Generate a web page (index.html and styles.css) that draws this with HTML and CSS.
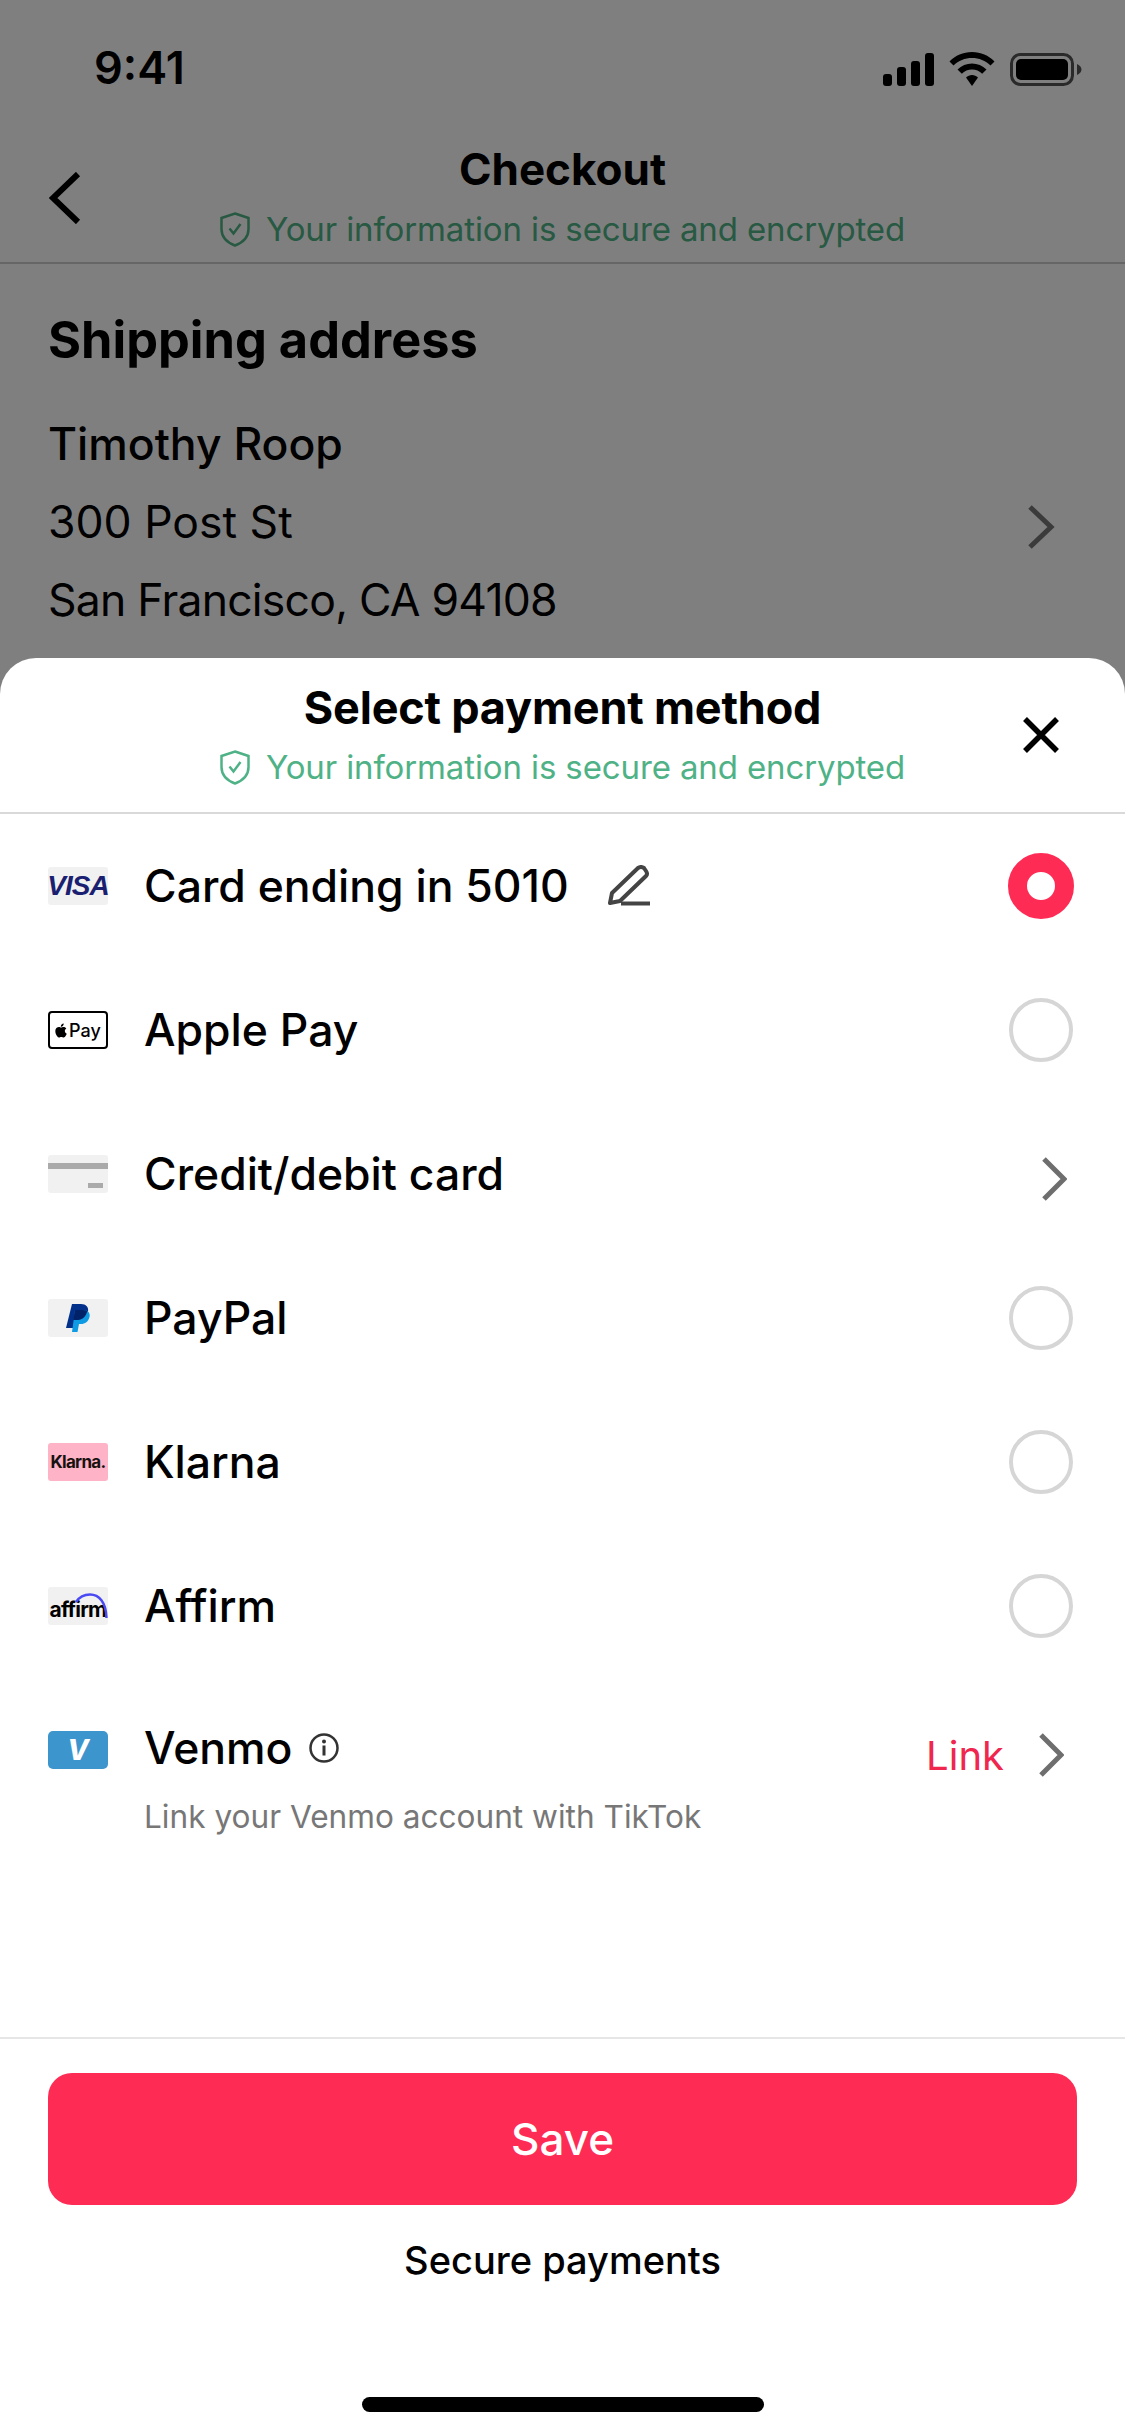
FILE: index.html
```html
<!DOCTYPE html>
<html lang="en">
<head>
<meta charset="utf-8">
<title>Checkout</title>
<link rel="stylesheet" href="styles.css">
</head>
<body>
<div class="screen">
  <div class="status">
    <span class="time">9:41</span>
    <div class="status-icons">
      <svg width="52" height="33" viewBox="0 0 52 33"><rect x="1" y="21" width="9" height="12" rx="3"/><rect x="15" y="14" width="9" height="19" rx="3"/><rect x="29" y="8" width="9" height="25" rx="3"/><rect x="43" y="0" width="9" height="33" rx="3"/></svg>
      <svg width="46" height="34" viewBox="0 0 46 34"><path d="M23 0C14 0 6.500 3.500 0.500 9.500L4.500 13.500C9.500 8.500 16 6 23 6S36.500 8.500 41.500 13.500L45.500 9.500C39.500 3.500 32 0 23 0Z"/><path d="M23 11.500C17.500 11.500 12.500 13.500 8.500 17.500L12.800 21.800C15.500 19 19 17.500 23 17.500S30.500 19 33.200 21.800L37.500 17.500C33.500 13.500 28.500 11.500 23 11.500Z"/><path d="M23 23C20.700 23 18.700 23.900 17 25.500L23 34L29 25.500C27.300 23.900 25.300 23 23 23Z"/></svg>
      <svg width="72" height="33" viewBox="0 0 72 33"><rect x="1.500" y="1.500" width="61" height="30" rx="9" fill="none" stroke="#555" stroke-width="3"/><rect x="6" y="6" width="52" height="21" rx="5"/><path d="M67 11C69.500 12 71.500 14 71.500 16.500S69.500 21 67 22Z" fill="#555"/></svg>
    </div>
  </div>

  <header class="nav">
    <svg class="back" width="32" height="52" viewBox="0 0 32 52"><path d="M29 2L4 26L29 50" fill="none" stroke="#000" stroke-width="6"/></svg>
    <h1 class="nav-title">Checkout</h1>
    <div class="secure secure-top">
      <svg width="30" height="35" viewBox="0 0 30 35"><path d="M15 1.500L28.500 6V17C28.500 25 23 30.500 15 33.500C7 30.500 1.500 25 1.500 17V6Z" fill="none" stroke="currentColor" stroke-width="2.500"/><path d="M9.500 16.500L13.500 21.500L20.500 12" fill="none" stroke="currentColor" stroke-width="2.500"/></svg>
      <span>Your information is secure and encrypted</span>
    </div>
  </header>

  <section class="address">
    <h2 class="address-title">Shipping address</h2>
    <div class="address-body">
      <div>
        <div class="addr-line addr-name">Timothy Roop</div>
        <div class="addr-line">300 Post St</div>
        <div class="addr-line addr-city">San Francisco, CA 94108</div>
      </div>
      <svg class="addr-chevron" width="28" height="44" viewBox="0 0 28 44"><path d="M3 2L24 22L3 42" fill="none" stroke="#777" stroke-width="5"/></svg>
    </div>
  </section>

  <div class="scrim"></div>

  <section class="sheet">
    <header class="sheet-head">
      <h2 class="sheet-title">Select payment method</h2>
      <div class="secure secure-sheet">
        <svg width="30" height="35" viewBox="0 0 30 35"><path d="M15 1.500L28.500 6V17C28.500 25 23 30.500 15 33.500C7 30.500 1.500 25 1.500 17V6Z" fill="none" stroke="currentColor" stroke-width="2.500"/><path d="M9.500 16.500L13.500 21.500L20.500 12" fill="none" stroke="currentColor" stroke-width="2.500"/></svg>
        <span>Your information is secure and encrypted</span>
      </div>
      <svg class="close" width="36" height="36" viewBox="0 0 36 36"><path d="M2 2L34 34M34 2L2 34" fill="none" stroke="#000" stroke-width="5.500"/></svg>
    </header>

    <div class="methods">
      <div class="row">
        <span class="logo logo-grey logo-visa">VISA</span>
        <span class="label">Card ending in 5010</span>
        <svg class="pencil" width="44" height="42" viewBox="0 0 44 42"><path d="M3 38L5 28L31 3Q34 1 37 3L39 6Q41 9 39 11L13 36Z" fill="none" stroke="#444" stroke-width="4" stroke-linejoin="round"/><path d="M14 38.500H43" stroke="#444" stroke-width="4"/></svg>
        <span class="radio radio-on"></span>
      </div>
      <div class="row">
        <span class="logo logo-apple">
          <svg width="12" height="15" viewBox="0 0 12 15"><path d="M9.800 8C9.800 6.300 11.200 5.500 11.300 5.400C10.500 4.200 9.200 4 8.800 4C7.700 3.900 6.700 4.600 6.100 4.600C5.600 4.600 4.700 4 3.800 4C2.600 4 1.500 4.700 0.900 5.800C-0.300 7.900 0.600 11 1.800 12.700C2.400 13.500 3.100 14.500 4 14.400C4.900 14.400 5.200 13.900 6.300 13.900C7.400 13.900 7.700 14.400 8.600 14.400C9.500 14.400 10.100 13.600 10.700 12.700C11.400 11.700 11.700 10.800 11.700 10.700C11.700 10.700 9.800 10 9.800 8ZM8 2.800C8.500 2.200 8.800 1.400 8.700 0.500C8 0.600 7.100 1 6.600 1.600C6.100 2.100 5.700 3 5.800 3.800C6.600 3.900 7.400 3.400 8 2.800Z"/></svg>
          <span>Pay</span>
        </span>
        <span class="label">Apple Pay</span>
        <span class="radio"></span>
      </div>
      <div class="row">
        <span class="logo logo-grey logo-card"><i class="card-stripe"></i><i class="card-dash"></i></span>
        <span class="label">Credit/debit card</span>
        <svg class="chevron chevron-credit" width="26" height="44" viewBox="0 0 26 44"><path d="M3 2L23 22L3 42" fill="none" stroke="#6e6e6e" stroke-width="5"/></svg>
      </div>
      <div class="row">
        <span class="logo logo-grey">
          <svg width="24" height="28" viewBox="0 0 24 28"><path d="M6 0H15C20 0 23 3 22 8C21 13 17 16 12 16H9L7.500 24H0Z" fill="#00308a"/><path d="M9 6H17C22 6 24.500 9 23.500 13C22.500 17.500 19 20 15 20H13L11.500 28H6Z" fill="#0f9be4"/><path d="M9 6H17C18.500 6 20 6.300 21.300 7C20 12.500 16.500 16 12 16H7.200Z" fill="#012169"/></svg>
        </span>
        <span class="label">PayPal</span>
        <span class="radio"></span>
      </div>
      <div class="row">
        <span class="logo logo-klarna">Klarna.</span>
        <span class="label">Klarna</span>
        <span class="radio"></span>
      </div>
      <div class="row">
        <span class="logo logo-grey logo-affirm">
          <span>affirm</span>
          <svg class="affirm-arc" width="34" height="26" viewBox="0 0 34 26"><path d="M2 9C6 3 10 1.500 16 1.500C25 1.500 32 9 32.500 25" fill="none" stroke="#4a4af4" stroke-width="2.500"/></svg>
        </span>
        <span class="label">Affirm</span>
        <span class="radio"></span>
      </div>
      <div class="row row-venmo">
        <span class="logo logo-venmo">V</span>
        <div class="venmo-text">
          <div class="venmo-head">
            <span class="label">Venmo</span>
            <svg class="info" width="30" height="30" viewBox="0 0 30 30"><circle cx="15" cy="15" r="13.500" fill="none" stroke="#333" stroke-width="2.500"/><rect x="13.500" y="12.500" width="3" height="10" fill="#333"/><circle cx="15" cy="8.500" r="2" fill="#333"/></svg>
          </div>
          <div class="venmo-sub">Link your Venmo account with TikTok</div>
        </div>
        <span class="link">Link</span>
        <svg class="chevron chevron-venmo" width="26" height="44" viewBox="0 0 26 44"><path d="M3 2L23 22L3 42" fill="none" stroke="#6e6e6e" stroke-width="5"/></svg>
      </div>
    </div>

    <footer class="sheet-foot">
      <div class="save">Save</div>
      <div class="secure-pay">Secure payments</div>
      <div class="home-bar"></div>
    </footer>
  </section>
</div>
</body>
</html>
```
FILE: styles.css
```css
* { box-sizing: border-box; }
html, body { margin: 0; padding: 0; }
body { font-family: Inter, "Liberation Sans", sans-serif; color: #000; background: #fff; }
h1, h2 { margin: 0; }
svg { display: block; flex: none; }

.screen { position: relative; width: 1125px; height: 2436px; overflow: hidden; background: #fff; }

.status { height: 132px; padding: 44px 43px 0 94px; display: flex; justify-content: space-between; align-items: flex-start; }
.time { font-size: 45px; line-height: 48px; font-weight: 600; }
.status-icons { display: flex; gap: 15px; align-items: center; padding-top: 8px; }

.nav { position: relative; height: 132px; border-bottom: 2px solid #ccc; display: flex; flex-direction: column; align-items: center; }
.back { position: absolute; left: 49px; top: 40px; }
.nav-title { font-size: 44px; line-height: 50px; font-weight: 700; margin-top: 12px; }
.secure { display: flex; align-items: center; gap: 16px; font-size: 33px; letter-spacing: -0.12px; line-height: 42px; font-weight: 400; }
.secure-top { color: #4fb286; margin-top: 14px; }
.secure-sheet { color: #4fb286; margin-top: 11px; }

.address { padding: 0 48px; }
.address-title { font-size: 50.5px; line-height: 60px; font-weight: 700; margin-top: 46px; }
.address-body { display: flex; justify-content: space-between; align-items: center; margin-top: 35px; padding-right: 22px; }
.addr-line { font-size: 44.5px; line-height: 78px; font-weight: 400; }
.addr-name { font-weight: 500; }
.addr-city { letter-spacing: -0.77px; }
.addr-chevron { margin-top: 10px; }

.scrim { position: absolute; inset: 0; background: rgba(0, 0, 0, 0.5); }

.sheet { position: absolute; left: 0; right: 0; top: 658px; bottom: 0; background: #fff; border-radius: 36px 36px 0 0; display: flex; flex-direction: column; }
.sheet-head { position: relative; height: 156px; border-bottom: 2px solid #d9d9d9; display: flex; flex-direction: column; align-items: center; padding-top: 23px; }
.sheet-title { font-size: 45px; letter-spacing: -0.2px; line-height: 54px; font-weight: 700; }
.close { position: absolute; left: 1023px; top: 59px; }

.methods { flex: 1; }
.row { height: 144px; padding-left: 48px; display: flex; align-items: center; }
.logo { flex: none; width: 60px; height: 38px; margin-right: 36px; border-radius: 3px; display: flex; align-items: center; justify-content: center; }
.logo-grey { background: #f1f1f1; }
.logo-visa { color: #1a1f71; font-family: "Liberation Sans", sans-serif; font-style: italic; font-weight: 700; font-size: 28px; letter-spacing: -1px; }
.logo-apple { border: 2px solid #000; border-radius: 4px; gap: 2px; font-size: 18px; font-weight: 500; }
.logo-card { position: relative; display: block; }
.card-stripe { position: absolute; left: 0; right: 0; top: 8px; height: 6px; background: #aaa; }
.card-dash { position: absolute; right: 5px; top: 28px; width: 15px; height: 5px; background: #aaa; }
.logo-klarna { background: #ffb3c7; font-size: 17px; font-weight: 700; letter-spacing: -0.7px; color: #17120f; }
.logo-affirm { position: relative; align-items: flex-end; padding-bottom: 3px; font-size: 21px; font-weight: 700; letter-spacing: -0.8px; overflow: hidden; }
.affirm-arc { position: absolute; right: 0; top: 6px; }
.logo-venmo { background: #3d95ce; color: #fff; font-size: 28px; font-weight: 800; font-style: italic; border-radius: 5px; }

.label { font-size: 44.5px; line-height: 54px; font-weight: 500; }
.pencil { margin-left: 38px; }
.radio { flex: none; width: 64px; height: 64px; border-radius: 50%; border: 4px solid #d6d6d6; margin-left: auto; margin-right: 52px; }
.radio-on { width: 66px; height: 66px; border: 19px solid #fe2c55; margin-right: 51px; }
.chevron { margin-left: auto; }
.chevron-credit { margin-right: 58px; margin-top: 10px; }

.row-venmo { align-items: flex-start; padding-top: 43px; }
.row-venmo .logo { margin-top: 10px; }
.venmo-text { display: flex; flex-direction: column; }
.venmo-head { display: flex; align-items: center; gap: 17px; }
.venmo-sub { font-size: 31.6px; line-height: 40px; color: #777; margin-top: 22px; }
.link { margin-left: auto; color: #f0264f; font-size: 40px; line-height: 48px; margin-top: 11px; }
.chevron-venmo { margin-left: 34px; margin-right: 61px; margin-top: 12px; }

.sheet-foot { height: 399px; border-top: 2px solid #e6e6e6; padding: 34px 48px 0; display: flex; flex-direction: column; align-items: center; position: relative; }
.save { width: 100%; height: 132px; border-radius: 24px; background: #fe2c55; color: #fff; font-size: 44px; font-weight: 500; display: flex; align-items: center; justify-content: center; }
.secure-pay { font-size: 38px; line-height: 46px; font-weight: 500; margin-top: 32px; }
.home-bar { width: 402px; height: 15px; border-radius: 8px; background: #000; position: absolute; left: 362px; bottom: 24px; }
```
